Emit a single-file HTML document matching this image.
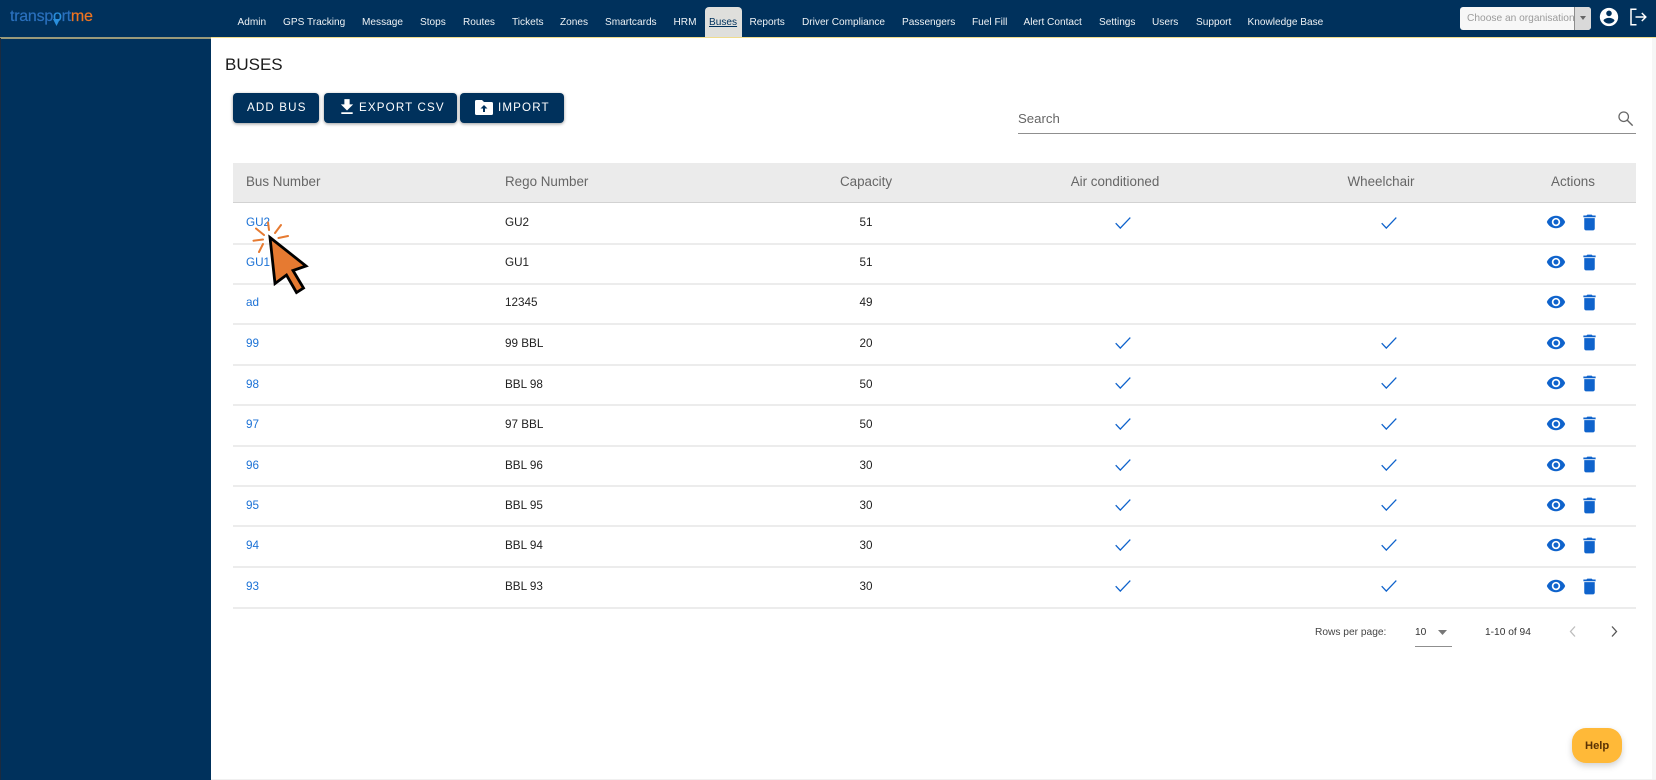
<!DOCTYPE html>
<html lang="en">
<head>
<meta charset="utf-8">
<title>Buses</title>
<style>
html,body{margin:0;padding:0;background:#fff}
body{width:1656px;height:780px;position:relative;overflow:hidden;font-family:"Liberation Sans",sans-serif;color:#222}
div,span,svg{position:absolute}
.t{line-height:20px;height:20px;white-space:nowrap}
.nav{top:13px;font-size:10.1px;color:#eef2f5;line-height:20px;white-space:nowrap}
.btn{top:93px;height:30px;background:#00315c;border-radius:4px;box-shadow:0 1px 3px rgba(0,0,0,.4)}
.bt{top:5px;line-height:20px;font-size:11.6px;letter-spacing:1.15px;color:#fff;white-space:nowrap}
.h{top:172px;font-size:13.4px;color:#666;line-height:20px;white-space:nowrap}
.c{transform:translateX(-50%)}
.l{left:233px;width:1403px;height:2px;background:#ececec}
.r{font-size:11.7px;line-height:20px;white-space:nowrap;color:#222;margin-top:1px}
.a{color:#1c72d6;left:246px}
.b{left:505px}
.n{left:866px;transform:translateX(-50%)}
</style>
</head>
<body>
<svg width="0" height="0" style="position:absolute">
<defs>
<symbol id="eye" viewBox="0 0 24 24"><path fill="#0f63cc" d="M12 4.5C7 4.5 2.73 7.61 1 12c1.73 4.39 6 7.5 11 7.5s9.27-3.11 11-7.5c-1.73-4.39-6-7.5-11-7.5zM12 17c-2.76 0-5-2.24-5-5s2.24-5 5-5 5 2.24 5 5-2.24 5-5 5zm0-8c-1.66 0-3 1.34-3 3s1.34 3 3 3 3-1.34 3-3-1.34-3-3-3z"/></symbol>
<symbol id="bin" viewBox="0 0 24 24"><path fill="#0f63cc" d="M6 19c0 1.1.9 2 2 2h8c1.1 0 2-.9 2-2V7H6v12zM19 4h-3.5l-1-1h-5l-1 1H5v2h14V4z"/></symbol>
<symbol id="chk" viewBox="0 0 16 12"><path fill="none" stroke="#0f63cc" stroke-width="1.3" d="M.7 6.2l4.6 4.9L15.3.6"/></symbol>
</defs>
</svg>

<!-- Header and sidebar -->
<div style="left:0;top:0;width:1656px;height:37px;background:#00315c"></div>
<div style="left:0;top:37px;width:211px;height:2px;background:#9a9a7a"></div>
<div style="left:211px;top:37px;width:1445px;height:1px;background:#f0dc8c"></div>
<div style="left:1px;top:39px;width:210px;height:741px;background:#00315c"></div>
<div style="left:0;top:38px;width:1px;height:742px;background:#1b2b40"></div>
<div style="left:1652px;top:38px;width:4px;height:742px;background:#f6f6f6"></div>
<div style="left:211px;top:779px;width:1445px;height:1px;background:#f0f0f0"></div>

<!-- Logo -->
<div class="t" style="left:10px;top:7px;font-size:16px;letter-spacing:-.25px;color:#2a70bd;-webkit-text-stroke:.2px">transp<span style="position:static;color:#2a8fdc">o</span>rt<span style="position:static;color:#ee7420">me</span></div>
<svg style="left:53px;top:19px" width="7" height="7" viewBox="0 0 7 7"><path fill="#2a8fdc" d="M0 0h7L3.5 7z"/></svg>

<!-- Nav -->
<div style="left:705px;top:7px;width:37px;height:30px;background:#dfdfdc;border-radius:4px 4px 0 0"></div>
<span class="nav" style="left:237.5px">Admin</span>
<span class="nav" style="left:283px">GPS Tracking</span>
<span class="nav" style="left:362px">Message</span>
<span class="nav" style="left:420px">Stops</span>
<span class="nav" style="left:463px">Routes</span>
<span class="nav" style="left:512px">Tickets</span>
<span class="nav" style="left:560px">Zones</span>
<span class="nav" style="left:605px">Smartcards</span>
<span class="nav" style="left:673.5px">HRM</span>
<span class="nav" style="left:709px;color:#00315c;text-decoration:underline">Buses</span>
<span class="nav" style="left:749.5px">Reports</span>
<span class="nav" style="left:802px">Driver Compliance</span>
<span class="nav" style="left:902px">Passengers</span>
<span class="nav" style="left:972px">Fuel Fill</span>
<span class="nav" style="left:1023.5px">Alert Contact</span>
<span class="nav" style="left:1099px">Settings</span>
<span class="nav" style="left:1152px">Users</span>
<span class="nav" style="left:1196px">Support</span>
<span class="nav" style="left:1247.5px">Knowledge Base</span>

<!-- Organisation selector -->
<div style="left:1460px;top:7px;width:131px;height:23px;background:#f7f7f7;border-radius:3px;overflow:hidden">
  <span class="t" style="left:7px;top:2px;font-size:10.2px;color:#9b9b9b">Choose an organisation</span>
  <div style="left:114px;top:0;width:17px;height:23px;background:#d9d9d9;border-left:1px solid #8d8d8d"></div>
  <svg style="left:120px;top:9px" width="6" height="5" viewBox="0 0 6 5"><path fill="#666" d="M0 0h6L3 4z"/></svg>
</div>
<svg style="left:1598px;top:6px" width="22" height="22" viewBox="0 0 24 24"><path fill="#fff" d="M12 2C6.48 2 2 6.48 2 12s4.48 10 10 10 10-4.48 10-10S17.52 2 12 2zm0 3c1.66 0 3 1.34 3 3s-1.34 3-3 3-3-1.34-3-3 1.34-3 3-3zm0 14.2c-2.5 0-4.71-1.28-6-3.22.03-1.99 4-3.08 6-3.08 1.99 0 5.97 1.09 6 3.08-1.29 1.94-3.5 3.22-6 3.22z"/></svg>
<svg style="left:1629px;top:8px" width="18" height="18" viewBox="0 0 18 18"><path fill="none" stroke="#fff" stroke-width="1.5" d="M7.5 1.3H2v15.4h5.5M6.5 9h10M12.8 5l4 4-4 4"/></svg>

<!-- Title and actions -->
<div class="t" style="left:225px;top:55px;font-size:17px;color:#1b1b1b">BUSES</div>

<div class="btn" style="left:233px;width:86px"><span class="bt" style="left:14px">ADD BUS</span></div>
<div class="btn" style="left:324px;width:133px">
  <svg style="left:16px;top:5px" width="14" height="17" viewBox="0 0 16 19"><path fill="#fff" d="M5 1h6v6h4l-7 7-7-7h4zM1.500 16h13v2h-13z"/></svg>
  <span class="bt" style="left:35px">EXPORT CSV</span>
</div>
<div class="btn" style="left:460px;width:104px">
  <svg style="left:15px;top:7px" width="18" height="15" viewBox="0 0 18 15"><path fill="#fff" d="M1.500 0H7l2 2h7.500A1.500 1.500 0 0 1 18 3.500v10a1.500 1.500 0 0 1-1.500 1.500h-15A1.500 1.500 0 0 1 0 13.500v-12A1.500 1.500 0 0 1 1.500 0z"/><path fill="#00315c" d="M9 5l3.500 3.500H10V12H8V8.500H5.500z"/></svg>
  <span class="bt" style="left:38px">IMPORT</span>
</div>

<!-- Search -->
<div class="t" style="left:1018px;top:109px;font-size:13.2px;color:#666">Search</div>
<div style="left:1018px;top:133px;width:618px;height:1px;background:#8f8f8f"></div>
<svg style="left:1617px;top:110px" width="17" height="17" viewBox="0 0 19 19"><circle cx="7.500" cy="7.500" r="5.300" fill="none" stroke="#666" stroke-width="1.400"/><path stroke="#666" stroke-width="1.600" d="M11.500 11.500l6 6"/></svg>

<!-- Table header -->
<div style="left:233px;top:163px;width:1403px;height:39px;background:#ebebeb"></div>
<div style="left:233px;top:202px;width:1403px;height:1px;background:#d2d2d2"></div>
<span class="h" style="left:246px">Bus Number</span>
<span class="h" style="left:505px">Rego Number</span>
<span class="h c" style="left:866px">Capacity</span>
<span class="h c" style="left:1115px">Air conditioned</span>
<span class="h c" style="left:1381px">Wheelchair</span>
<span class="h c" style="left:1573px">Actions</span>

<!-- Row lines -->
<div class="l" style="top:243px"></div>
<div class="l" style="top:283px"></div>
<div class="l" style="top:323px"></div>
<div class="l" style="top:364px"></div>
<div class="l" style="top:404px"></div>
<div class="l" style="top:445px"></div>
<div class="l" style="top:485px"></div>
<div class="l" style="top:525px"></div>
<div class="l" style="top:566px"></div>
<div class="l" style="top:607px"></div>

<!-- Rows -->
<span class="r a" style="top:212px">GU2</span><span class="r b" style="top:212px">GU2</span><span class="r n" style="top:212px">51</span>
<svg style="left:1115px;top:217px" width="16" height="12"><use href="#chk"/></svg><svg style="left:1381px;top:217px" width="16" height="12"><use href="#chk"/></svg>
<svg style="left:1546px;top:212px" width="20" height="20"><use href="#eye"/></svg><svg style="left:1579px;top:212px" width="21" height="21"><use href="#bin"/></svg>

<span class="r a" style="top:252px">GU1</span><span class="r b" style="top:252px">GU1</span><span class="r n" style="top:252px">51</span>
<svg style="left:1546px;top:252px" width="20" height="20"><use href="#eye"/></svg><svg style="left:1579px;top:252px" width="21" height="21"><use href="#bin"/></svg>

<span class="r a" style="top:292px">ad</span><span class="r b" style="top:292px">12345</span><span class="r n" style="top:292px">49</span>
<svg style="left:1546px;top:292px" width="20" height="20"><use href="#eye"/></svg><svg style="left:1579px;top:292px" width="21" height="21"><use href="#bin"/></svg>

<span class="r a" style="top:333px">99</span><span class="r b" style="top:333px">99 BBL</span><span class="r n" style="top:333px">20</span>
<svg style="left:1115px;top:337px" width="16" height="12"><use href="#chk"/></svg><svg style="left:1381px;top:337px" width="16" height="12"><use href="#chk"/></svg>
<svg style="left:1546px;top:333px" width="20" height="20"><use href="#eye"/></svg><svg style="left:1579px;top:332px" width="21" height="21"><use href="#bin"/></svg>

<span class="r a" style="top:374px">98</span><span class="r b" style="top:374px">BBL 98</span><span class="r n" style="top:374px">50</span>
<svg style="left:1115px;top:377px" width="16" height="12"><use href="#chk"/></svg><svg style="left:1381px;top:377px" width="16" height="12"><use href="#chk"/></svg>
<svg style="left:1546px;top:373px" width="20" height="20"><use href="#eye"/></svg><svg style="left:1579px;top:373px" width="21" height="21"><use href="#bin"/></svg>

<span class="r a" style="top:414px">97</span><span class="r b" style="top:414px">97 BBL</span><span class="r n" style="top:414px">50</span>
<svg style="left:1115px;top:418px" width="16" height="12"><use href="#chk"/></svg><svg style="left:1381px;top:418px" width="16" height="12"><use href="#chk"/></svg>
<svg style="left:1546px;top:414px" width="20" height="20"><use href="#eye"/></svg><svg style="left:1579px;top:414px" width="21" height="21"><use href="#bin"/></svg>

<span class="r a" style="top:455px">96</span><span class="r b" style="top:455px">BBL 96</span><span class="r n" style="top:455px">30</span>
<svg style="left:1115px;top:459px" width="16" height="12"><use href="#chk"/></svg><svg style="left:1381px;top:459px" width="16" height="12"><use href="#chk"/></svg>
<svg style="left:1546px;top:455px" width="20" height="20"><use href="#eye"/></svg><svg style="left:1579px;top:454px" width="21" height="21"><use href="#bin"/></svg>

<span class="r a" style="top:495px">95</span><span class="r b" style="top:495px">BBL 95</span><span class="r n" style="top:495px">30</span>
<svg style="left:1115px;top:499px" width="16" height="12"><use href="#chk"/></svg><svg style="left:1381px;top:499px" width="16" height="12"><use href="#chk"/></svg>
<svg style="left:1546px;top:495px" width="20" height="20"><use href="#eye"/></svg><svg style="left:1579px;top:495px" width="21" height="21"><use href="#bin"/></svg>

<span class="r a" style="top:535px">94</span><span class="r b" style="top:535px">BBL 94</span><span class="r n" style="top:535px">30</span>
<svg style="left:1115px;top:539px" width="16" height="12"><use href="#chk"/></svg><svg style="left:1381px;top:539px" width="16" height="12"><use href="#chk"/></svg>
<svg style="left:1546px;top:535px" width="20" height="20"><use href="#eye"/></svg><svg style="left:1579px;top:535px" width="21" height="21"><use href="#bin"/></svg>

<span class="r a" style="top:576px">93</span><span class="r b" style="top:576px">BBL 93</span><span class="r n" style="top:576px">30</span>
<svg style="left:1115px;top:580px" width="16" height="12"><use href="#chk"/></svg><svg style="left:1381px;top:580px" width="16" height="12"><use href="#chk"/></svg>
<svg style="left:1546px;top:576px" width="20" height="20"><use href="#eye"/></svg><svg style="left:1579px;top:576px" width="21" height="21"><use href="#bin"/></svg>

<!-- Pagination -->
<span class="t" style="left:1315px;top:623px;font-size:10.2px;color:#444">Rows per page:</span>
<span class="t" style="left:1415px;top:623px;font-size:10.2px;color:#333">10</span>
<svg style="left:1438px;top:630px" width="9" height="5"><path fill="#777" d="M0 0h9L4.500 5z"/></svg>
<div style="left:1415px;top:646px;width:37px;height:1px;background:#8f8f8f"></div>
<span class="t" style="left:1485px;top:623px;font-size:10.2px;color:#333">1-10 of 94</span>
<svg style="left:1568px;top:625px" width="9" height="13"><path fill="none" stroke="#bdbdbd" stroke-width="1.300" d="M7 1.500L2.500 6.500 7 11.500"/></svg>
<svg style="left:1610px;top:625px" width="9" height="13"><path fill="none" stroke="#555" stroke-width="1.300" d="M2 1.500l4.500 5L2 11.500"/></svg>

<!-- Help -->
<div style="left:1572px;top:728px;width:50px;height:35px;background:#ffb938;border-radius:14px;box-shadow:0 3px 7px rgba(0,0,0,.18)">
  <span class="t" style="left:13px;top:8px;font-size:11.2px;font-weight:bold;color:#5a3205">Help</span>
</div>

<!-- Click cursor -->
<svg style="left:245px;top:215px" width="70" height="85" viewBox="245 215 70 85">
  <g stroke="#e67a31" stroke-width="2" stroke-linecap="round" fill="none">
    <path d="M268 222.500l1 7.500M281 225l-6 8M288 236l-9.500 2M263 244l-4 8M263 239.500l-9.500 1.200M264 235l-8-6.500"/>
  </g>
  <path fill="#e67a31" stroke="#000" stroke-width="2.800" stroke-linejoin="miter" d="M270 237.500L306 266l-13 4.500 10.500 17.500-7 4.500-10-17.500-11.500 8.500z"/>
</svg>
</body>
</html>
